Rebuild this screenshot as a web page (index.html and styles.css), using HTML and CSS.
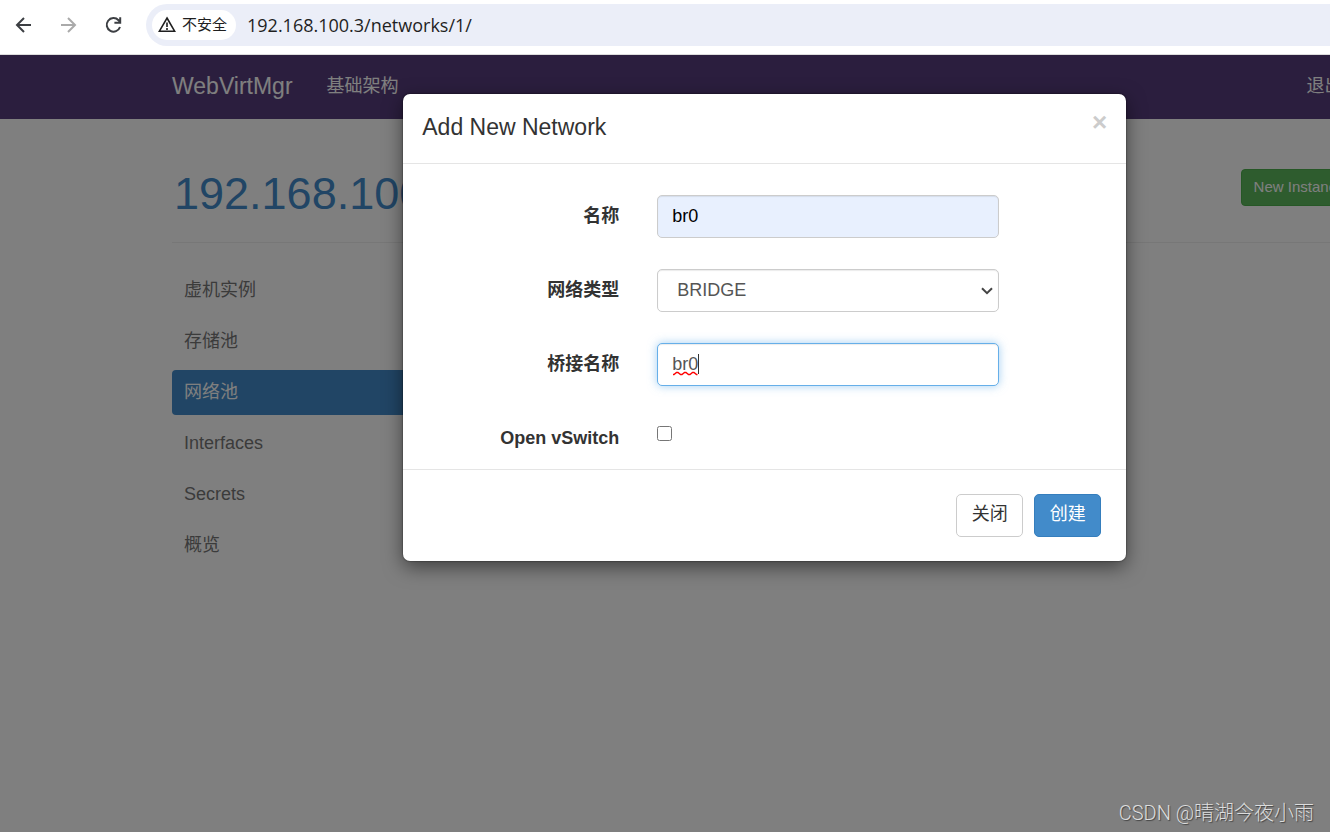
FILE: index.html
```html
<!DOCTYPE html>
<html lang="zh-CN">
<head>
<meta charset="utf-8">
<title>WebVirtMgr</title>
<link rel="stylesheet" href="styles.css">
</head>
<body>
<div class="toolbar">
  <button class="tool" type="button" aria-label="后退"><svg viewBox="0 0 20 20" width="20" height="20"><path d="M17 10H3.500M10 3L3 10l7 7"/></svg></button>
  <button class="tool tool-off" type="button" aria-label="前进"><svg viewBox="0 0 20 20" width="20" height="20"><path d="M2 10h13.500M9 3l7 7-7 7"/></svg></button>
  <button class="tool" type="button" aria-label="重新加载"><svg viewBox="0 0 20 20" width="20" height="20"><path d="M16 12A6.800 6.800 0 1 1 14.500 5.200L16 7M16.200 2.200v5.600h-5.800"/></svg></button>
  <div class="address">
    <button class="security" type="button"><svg class="warn" viewBox="0 0 20 18" width="20" height="18"><path d="M10 2L17.600 15.200H2.400z"/><path d="M10 6.500v4.500M10 12v2"/></svg><span>不安全</span></button>
    <input class="url" type="text" aria-label="地址" value="192.168.100.3/networks/1/">
  </div>
</div>
<div class="viewport">
  <div class="page">
    <nav class="navbar">
      <a class="brand" href="#">WebVirtMgr</a>
      <a class="nav-link" href="#">基础架构</a>
      <a class="nav-link logout" href="#">退出</a>
    </nav>
    <main class="container">
      <header class="page-header">
        <h1><a href="#">192.168.100.3</a></h1>
        <button class="new-instance" type="button">New Instance</button>
      </header>
      <nav class="side">
        <a href="#">虚机实例</a>
        <a href="#">存储池</a>
        <a class="active" href="#">网络池</a>
        <a href="#">Interfaces</a>
        <a href="#">Secrets</a>
        <a href="#">概览</a>
      </nav>
    </main>
    <div class="backdrop">
      <form class="modal" role="dialog" aria-labelledby="modal-title">
        <div class="modal-header">
          <h4 id="modal-title">Add New Network</h4>
          <button class="close" type="button" aria-label="Close">×</button>
        </div>
        <div class="modal-body">
          <label for="name">名称</label>
          <input class="control filled" id="name" type="text" value="br0">
          <label for="type">网络类型</label>
          <div class="field">
            <select class="control" id="type"><option>BRIDGE</option></select>
            <svg class="chevron" viewBox="0 0 12 8" width="12" height="8"><path d="M1 1.200l5 5 5-5"/></svg>
          </div>
          <label for="bridge">桥接名称</label>
          <div class="field">
            <input class="control focused" id="bridge" type="text" value="br0" spellcheck="false">
            <svg class="squiggle" viewBox="0 0 28 22" width="28" height="22"><path class="wave" d="M1 20.500h1l2.500-2h1.500l2.500 2h1.500l2.500-2h1.500l2.500 2h1.500l2.500-2h1.500l2.500 2h1"/><path class="caret" d="M26.500 0v20"/></svg>
          </div>
          <label for="ovs">Open vSwitch</label>
          <input class="check" id="ovs" type="checkbox">
        </div>
        <div class="modal-footer">
          <button class="btn" type="button">关闭</button>
          <button class="btn primary" type="button">创建</button>
        </div>
      </form>
    </div>
  </div>
  <div class="credit">CSDN @晴湖今夜小雨</div>
</div>
</body>
</html>
```
FILE: styles.css
```css
* { box-sizing: border-box; }
body {
  margin: 0;
  min-height: 100vh;
  display: flex;
  flex-direction: column;
  overflow: hidden;
  font: 18px/25px "Liberation Sans", "Noto Sans CJK SC", sans-serif;
  color: #333;
}
button, input, select { font: inherit; color: inherit; margin: 0; }
a { text-decoration: none; }
svg { fill: none; stroke: currentColor; stroke-width: 2; }

.toolbar {
  display: flex;
  align-items: center;
  gap: 25px;
  height: 55px;
  padding: 0 0 5px 14px;
  background: #fff;
  border-bottom: 1px solid #ddd;
}
.tool { display: flex; padding: 0; border: 0; background: none; color: #3c3f43; }
.tool-off { color: #aaa; }
.address {
  flex: 1;
  display: flex;
  align-items: center;
  gap: 11px;
  height: 42px;
  margin-left: -3px;
  padding-left: 6px;
  border-radius: 21px 0 0 21px;
  background: #ebeef8;
}
.security {
  display: flex;
  align-items: center;
  gap: 5px;
  height: 30px;
  padding: 0 9px 0 5px;
  border: 0;
  border-radius: 15px;
  background: #fff;
  color: #1f1f1f;
  font-size: 15px;
  white-space: nowrap;
}
.warn { stroke-width: 1.6; }
.url {
  flex: 1;
  padding: 0;
  border: 0;
  outline: 0;
  background: none;
  color: #1f1f1f;
  font: 18px/26px "Open Sans", "Noto Sans", sans-serif;
}

.viewport { position: relative; flex: 1; overflow: hidden; background: #808080; }
.page { position: relative; width: 115%; min-height: 777px; background: #fff; }
.navbar {
  display: flex;
  align-items: center;
  height: 64px;
  padding: 0 187px 2px 172px;
  background: #563d7c;
}
.brand { margin-right: 34px; font-size: 23px; color: #fff; }
.nav-link { color: #fff; }
.logout { margin-left: auto; }
.container { padding: 50px 172px 0; }
.page-header {
  display: flex;
  align-items: flex-start;
  justify-content: space-between;
  padding-bottom: 24px;
  border-bottom: 1px solid #eee;
}
h1 { margin: 0; padding-left: 2px; font-size: 45px; line-height: 49px; font-weight: 400; }
h1 a { color: #428bca; }
.new-instance {
  padding: 4px 12px 6px;
  border: 1px solid #4cae4c;
  border-radius: 4px;
  background: #5cb85c;
  color: #fff;
  font-size: 15px;
  white-space: nowrap;
}
.side { display: flex; flex-direction: column; gap: 6px; width: 25%; padding-top: 25px; }
.side a { padding: 10px 12px; border-radius: 4px; color: #777; }
.side .active { background: #428bca; color: #fff; }

.backdrop { position: absolute; inset: 0; padding-top: 39px; background: rgba(0, 0, 0, .5); }
.modal {
  max-width: 723px;
  margin: 0 auto;
  border-radius: 7px;
  background: #fff;
  box-shadow: 0 6px 19px rgba(0, 0, 0, .5), 0 0 1px 1px rgba(0, 0, 0, .2);
}
.modal-header {
  display: flex;
  justify-content: space-between;
  align-items: flex-start;
  padding: 16px 19px 19px;
  border-bottom: 1px solid #e5e5e5;
}
h4 { margin: 0; font-size: 23px; line-height: 34px; font-weight: 400; }
.close {
  padding: 0;
  border: 0;
  background: none;
  color: #ccc;
  font-size: 26px;
  line-height: 25px;
  font-weight: 700;
}
.modal-body {
  display: grid;
  grid-template-columns: 216fr 342fr;
  column-gap: 38px;
  row-gap: 31px;
  padding: 31px 127px 18px 0;
}
.modal-body label { padding-top: 9px; text-align: right; font-weight: 700; }
.field { position: relative; }
.control {
  display: block;
  width: 100%;
  height: 43px;
  padding: 0 14px;
  border: 1px solid #ccc;
  border-radius: 5px;
  outline: 0;
  background: #fff;
  color: #555;
  box-shadow: inset 0 1px 1px rgba(0, 0, 0, .08);
  appearance: none;
}
select.control { padding-left: 19px; }
.filled { background: #e8f0fe; color: #000; }
.focused { border-color: #66afe9; box-shadow: inset 0 1px 1px rgba(0, 0, 0, .08), 0 0 10px rgba(102, 175, 233, .6); }
.chevron { position: absolute; right: 6px; top: 18px; color: #444; pointer-events: none; }
.squiggle { position: absolute; left: 15px; top: 11px; pointer-events: none; }
.wave { stroke: #f00; stroke-width: 1.4; }
.caret { stroke: #333; stroke-width: 1; }
.check { width: 15px; height: 15px; margin-top: 9px; }
.modal-footer {
  display: flex;
  justify-content: flex-end;
  gap: 11px;
  padding: 24px 25px;
  border-top: 1px solid #e5e5e5;
}
.btn {
  min-width: 67px;
  padding: 7px 14px 9px;
  border: 1px solid #ccc;
  border-radius: 5px;
  background: #fff;
  line-height: 25px;
}
.primary { border-color: #357ebd; background: #428bca; color: #fff; }
.credit {
  position: absolute;
  right: 16px;
  bottom: 6px;
  color: #ddd;
  font-family: Roboto, "Noto Sans CJK SC", sans-serif;
  font-size: 20px;
  font-weight: 300;
  text-shadow: 1px 1px 1px #444;
}
```
